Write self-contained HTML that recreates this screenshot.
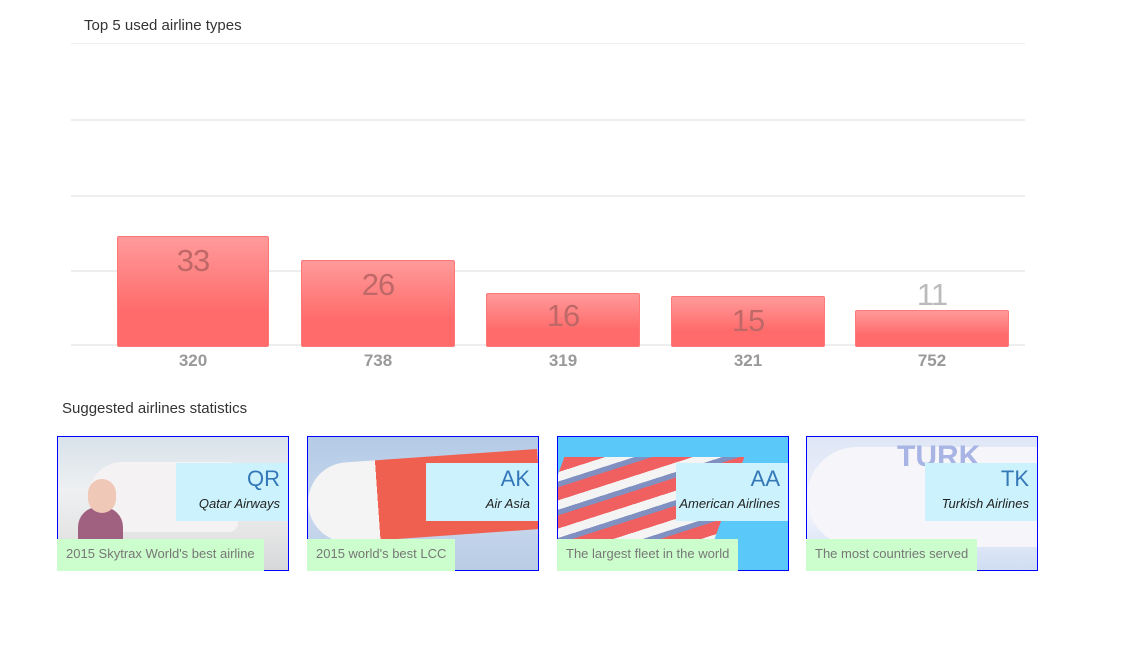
<!DOCTYPE html><html><head><style>
body{margin:0;width:1148px;height:647px;background:#fff;font-family:"Liberation Sans",sans-serif;position:relative;overflow:hidden}
.a{position:absolute}
.g{position:absolute;left:71px;width:954px;height:2px;background:#eee}
.bar{position:absolute;width:152px;bottom:300px;border:1px solid #f77;border-radius:2px;background:linear-gradient(#ff9a9a,#ff6a6a 70%,#ff6a6a);box-sizing:border-box;text-align:center;color:#c06868;font-size:31px;padding-top:6px;letter-spacing:-1px}
.lab{position:absolute;top:351px;width:152px;text-align:center;color:#999;font-weight:bold;font-size:17px}
.card{position:absolute;top:436px;width:232px;height:135px;border:1px solid #00f;box-sizing:border-box;overflow:hidden}
.code{position:absolute;right:-1px;top:26px;width:113px;height:58px;background:#ccf3fd;text-align:right;box-sizing:border-box;padding-right:9px}
.code b{display:block;font-weight:normal;color:#3578b8;font-size:22px;margin-top:3px}
.code i{display:block;font-size:13px;color:#222;margin-top:4px}
.tag{position:absolute;top:539px;height:32px;background:#ccfdcc;color:#777;font-size:13px;line-height:30px;padding:0 9px}
</style></head><body>
<div class="a" style="left:84px;top:17px;font-size:15px;color:#333">Top 5 used airline types</div>
<div class="g" style="top:43px;height:1px"></div><div class="g" style="top:119px"></div><div class="g" style="top:195px"></div><div class="g" style="top:270px"></div><div class="g" style="top:344px"></div>
<div class="bar" style="left:117px;height:111px">33</div>
<div class="bar" style="left:301px;width:154px;height:87px">26</div>
<div class="bar" style="left:486px;width:154px;height:54px;padding-top:4px">16</div>
<div class="bar" style="left:671px;width:154px;height:51px;padding-top:6px">15</div>
<div class="bar" style="left:855px;width:154px;height:37px;padding-top:0;color:#bbb;line-height:1;"><span style="position:relative;top:-32px">11</span></div>
<div class="lab" style="left:117px">320</div><div class="lab" style="left:302px">738</div><div class="lab" style="left:487px">319</div><div class="lab" style="left:672px">321</div><div class="lab" style="left:856px">752</div>
<div class="a" style="left:62px;top:400px;font-size:15px;color:#333">Suggested airlines statistics</div>

<div class="card" style="left:57px;background:linear-gradient(#d8e2ea,#eef0f2 40%,#e6e6e6 70%,#d6d8da)">
<div class="a" style="left:30px;top:25px;width:150px;height:70px;background:#f4f2f2;border-radius:40px 10px 10px 40px"></div>
<div class="a" style="left:20px;top:70px;width:45px;height:70px;background:#a06080;border-radius:20px 20px 0 0"></div>
<div class="a" style="left:30px;top:42px;width:28px;height:34px;background:#f0c8b8;border-radius:14px"></div>
<div class="code"><b>QR</b><i>Qatar Airways</i></div></div>
<div class="card" style="left:307px;background:linear-gradient(#b4cbe6,#c8d8ee 60%,#b8cce4)">
<div class="a" style="left:0;top:20px;width:232px;height:80px;background:linear-gradient(90deg,#f4f4f4 30%,#ef6050 30%);border-radius:40px 0 0 40px;transform:rotate(-4deg)"></div>
<div class="code"><b>AK</b><i>Air Asia</i></div></div>
<div class="card" style="left:557px;background:#5ac8f8">
<div class="a" style="left:-10px;top:20px;width:180px;height:90px;background:repeating-linear-gradient(160deg,#f06060 0 14px,#f4f4f4 14px 24px,#8090c0 24px 30px);transform:skewX(-20deg)"></div>
<div class="code"><b>AA</b><i>American Airlines</i></div></div>
<div class="card" style="left:806px;background:linear-gradient(#dfe6f5,#eef2fb 60%,#d0ddf2)">
<div class="a" style="left:0;top:10px;width:232px;height:100px;background:#f6f6fa;border-radius:50px 0 0 50px"></div>
<div class="a" style="left:90px;top:3px;font-size:30px;color:#a8b4e4;font-weight:bold">TURK</div>
<div class="code"><b>TK</b><i>Turkish Airlines</i></div></div>
<div class="tag" style="left:57px">2015 Skytrax World's best airline</div>
<div class="tag" style="left:307px">2015 world's best LCC</div>
<div class="tag" style="left:557px">The largest fleet in the world</div>
<div class="tag" style="left:806px">The most countries served</div>
</body></html>
